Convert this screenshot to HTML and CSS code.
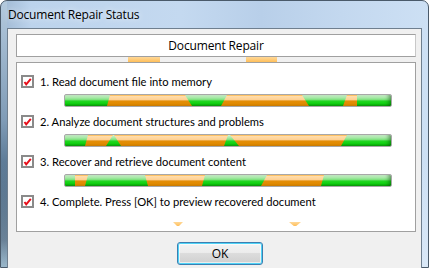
FILE: index.html
```html
<!DOCTYPE html>
<html>
<head>
<meta charset="utf-8">
<link rel="stylesheet" href="styles.css">
</head>
<body>
<div class="window">
  <div class="titlebar"><span class="title">Document Repair Status</span></div>
  <div class="client">
    <div class="header">Document Repair</div>
    <div class="content">
      <div class="step">
        <span class="check"><svg viewBox="0 0 9 9" width="9" height="9"><polyline points="1.5,5 3.2,7.3 7.8,1.8" /></svg></span>
        <span class="label">1. Read document file into memory</span>
      </div>
      <div class="bar">
        <span class="seg" style="left:42px;width:85px;clip-path:polygon(3px 0,78px 0,100% 100%,0 100%)"></span>
        <span class="seg" style="left:156px;width:88px;clip-path:polygon(6px 0,81px 0,100% 100%,0 100%)"></span>
        <span class="seg" style="left:278px;width:14px;clip-path:polygon(4px 0,100% 0,100% 100%,0 100%)"></span>
      </div>
      <div class="step">
        <span class="check"><svg viewBox="0 0 9 9" width="9" height="9"><polyline points="1.5,5 3.2,7.3 7.8,1.8" /></svg></span>
        <span class="label">2. Analyze document structures and problems</span>
      </div>
      <div class="bar">
        <span class="seg" style="left:20px;width:262px;clip-path:polygon(3px 0,100% 0,256px 100%,0 100%)"></span>
        <span class="seg green" style="left:41px;width:15px;clip-path:polygon(7px 0,8px 0,100% 100%,0 100%)"></span>
        <span class="seg green" style="left:159px;width:15px;clip-path:polygon(4px 0,6px 0,100% 100%,0 100%)"></span>
      </div>
      <div class="step">
        <span class="check"><svg viewBox="0 0 9 9" width="9" height="9"><polyline points="1.5,5 3.2,7.3 7.8,1.8" /></svg></span>
        <span class="label">3. Recover and retrieve document content</span>
      </div>
      <div class="bar">
        <span class="seg" style="left:10px;width:13px;clip-path:polygon(0 0,100% 0,10px 100%,0 100%)"></span>
        <span class="seg" style="left:80px;width:60px;clip-path:polygon(0 0,100% 0,57px 100%,3px 100%)"></span>
        <span class="seg" style="left:196px;width:63px;clip-path:polygon(6px 0,100% 0,60px 100%,0 100%)"></span>
      </div>
      <div class="step">
        <span class="check"><svg viewBox="0 0 9 9" width="9" height="9"><polyline points="1.5,5 3.2,7.3 7.8,1.8" /></svg></span>
        <span class="label">4. Complete. Press [OK] to preview recovered document</span>
      </div>
    </div>
    <div class="actions"><button class="ok">OK</button></div>
  </div>
  <span class="ghost g1"></span>
  <span class="ghost g2"></span>
  <span class="ghost g3"></span>
  <span class="ghost g4"></span>
</div>
</body>
</html>
```
FILE: styles.css
```css
html, body {
  margin: 0;
  padding: 0;
  background: #ffffff;
}
.window {
  position: relative;
  box-sizing: border-box;
  width: 429px;
  height: 268px;
  border: 1px solid #4a5a6a;
  border-radius: 7px 7px 0 0;
  display: flex;
  flex-direction: column;
  padding: 0 6px 6px 6px;
  background:
    linear-gradient(180deg, rgba(255,255,255,0) 0, rgba(255,255,255,0) 60%, rgba(230,240,250,.5) 100%),
    linear-gradient(180deg, #b4cade 0, #7f9bb6 45%, #1f3f5c 90%, #4d7d9a 100%) 0 0 / 6px 100% no-repeat,
    linear-gradient(90deg, #9fb8d2 0, #bcd3ec 30px, #c4d9f0 180px, #b8cfe9 260px, #c3d8ef 340px, #cde0f4 429px);
  font-family: "Open Sans", "Noto Sans", sans-serif;
}
.titlebar {
  height: 27px;
  flex: none;
  display: flex;
  align-items: center;
  padding-left: 1px;
}
.title {
  font-size: 12px;
  color: #000;
  letter-spacing: -0.2px;
  text-shadow: 0 0 6px rgba(255,255,255,.9);
}
.client {
  flex: 1;
  border: 1px solid #6f7f8f;
  background: #f0f0f0;
  padding: 5px 5px 5px 8px;
  display: flex;
  flex-direction: column;
}
.header {
  height: 21px;
  border: 1px solid #a0a0a0;
  border-right-color: #c8c8c8;
  background: #ffffff;
  display: flex;
  align-items: center;
  justify-content: center;
  font-size: 12px;
  letter-spacing: -0.15px;
  color: #000;
}
.content {
  margin-top: 5px;
  height: 158px;
  border: 1px solid #a0a0a0;
  background: #ffffff;
  padding: 10px 23px 0 4px;
  display: flex;
  flex-direction: column;
}
.step {
  height: 16px;
  display: flex;
  align-items: center;
  gap: 6px;
  font-family: Lato, "Open Sans", sans-serif;
  font-size: 11.2px;
  color: #000;
  white-space: nowrap;
}
.check {
  box-sizing: border-box;
  width: 13px;
  height: 13px;
  border: 2px solid #8a8a8a;
  background: #fff;
  display: flex;
  align-items: center;
  justify-content: center;
  flex: none;
}
.check polyline {
  fill: none;
  stroke: #e8101c;
  stroke-width: 2;
}
.bar {
  position: relative;
  height: 11px;
  margin: 5px 0 6px 43px;
  border: 1px solid #a8a8a8;
  border-radius: 2px;
  overflow: hidden;
  background: linear-gradient(180deg, #d2f4d2 0, #a6eaa6 25%, #7ee27e 42%, #22d622 55%, #10d010 78%, #0a9a0a 100%);
  box-shadow: inset -4px 0 4px -2px rgba(0,60,0,.5);
}
.seg {
  position: absolute;
  top: 0;
  bottom: 0;
  background: linear-gradient(180deg, #ffb23a 0, #ffdcaa 12%, #ffd092 42%, #e38e08 55%, #e08a00 80%, #c87a00 100%);
}
.seg.green {
  background: linear-gradient(180deg, #d2f4d2 0, #a6eaa6 25%, #7ee27e 42%, #22d622 55%, #10d010 78%, #0a9a0a 100%);
}
.actions {
  margin-top: 10px;
  display: flex;
}
.ok {
  margin-left: 161px;
  width: 86px;
  height: 23px;
  border: 1px solid #3c7fb1;
  border-radius: 3px;
  background: linear-gradient(180deg, #f4f4f4 0, #ececec 45%, #dcdcdc 50%, #cfcfcf 100%);
  box-shadow: inset 0 0 0 1px #4fd3f7, inset 0 0 0 2px rgba(255,255,255,.6);
  font-family: "Open Sans", "Noto Sans", sans-serif;
  font-size: 12px;
  color: #000;
  padding: 0;
}
.ghost {
  position: absolute;
  background: linear-gradient(180deg, #ffd898, #ffbf5a);
}
.g1 { left: 127px; top: 56px; width: 32px; height: 5px; }
.g2 { left: 245px; top: 56px; width: 31px; height: 5px; }
.g3 { left: 172px; top: 221px; width: 10px; height: 4px; clip-path: polygon(0 0,100% 0,60% 100%,40% 100%); }
.g4 { left: 288px; top: 221px; width: 12px; height: 4px; clip-path: polygon(0 0,100% 0,60% 100%,40% 100%); }
```
